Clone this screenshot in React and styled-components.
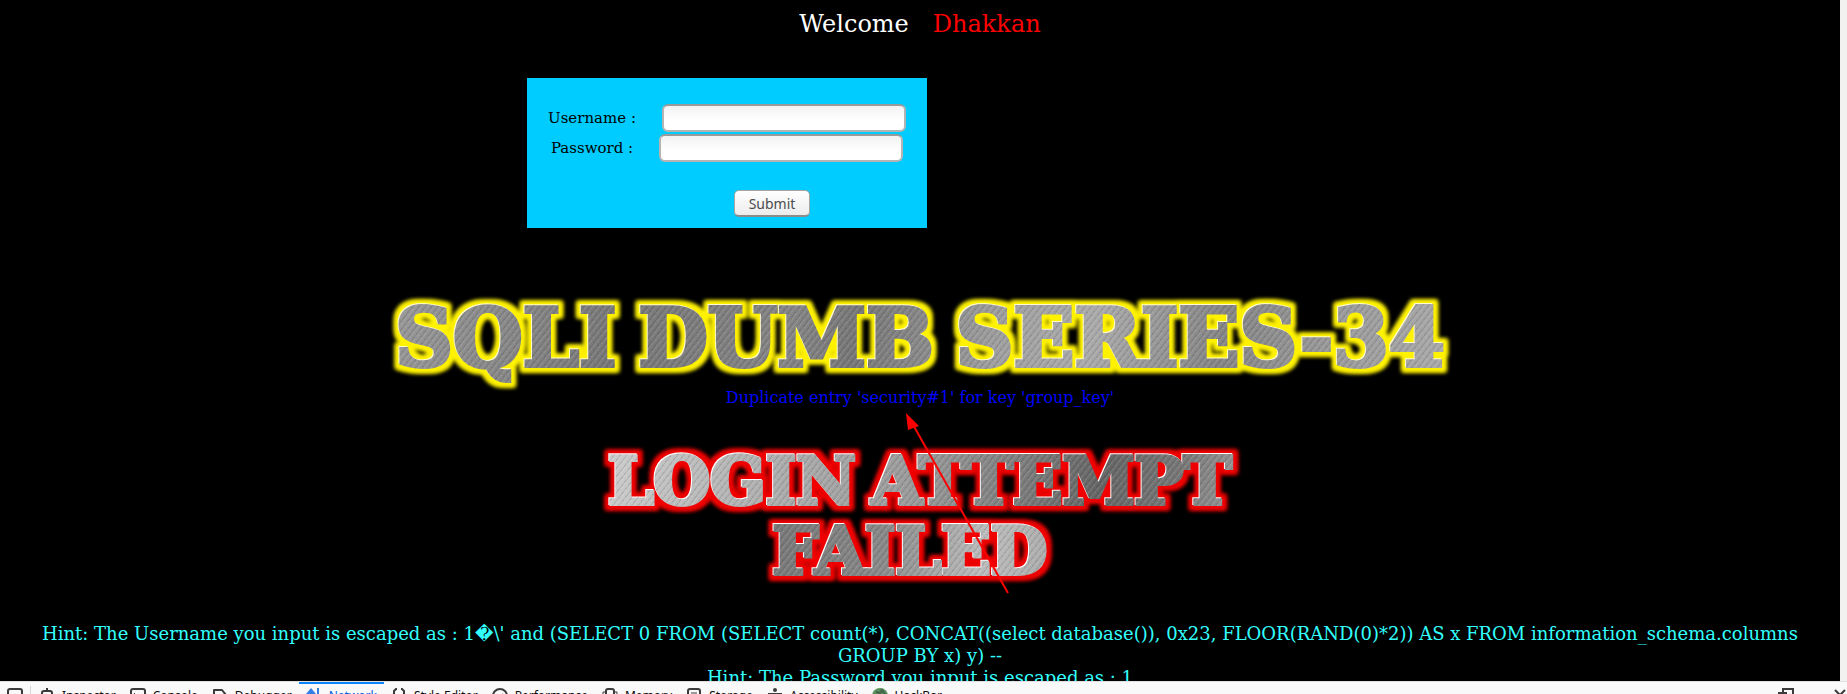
import React from "react";
import styled, { createGlobalStyle } from "styled-components";

const GlobalStyle = createGlobalStyle`
  * { box-sizing: border-box; }
  body { margin: 0; background: #000; }
`;

const Window = styled.div`
  display: flex;
  flex-direction: column;
  height: 100vh;
  overflow: hidden;
  background: #000;
  font-family: "DejaVu Serif", serif;
`;

const Viewport = styled.div`
  display: flex;
  flex: 1;
  min-height: 0;
`;

const Page = styled.main`
  position: relative;
  flex: 1;
  min-width: 0;
  overflow: hidden;
  text-align: center;
`;

const Scrollbar = styled.div`
  width: 7px;
  background: #f2f1f0;
`;

const Welcome = styled.h1`
  display: flex;
  justify-content: center;
  gap: 24px;
  margin: 9px 0 0;
  font-size: 24px;
  font-weight: 400;
  line-height: 30px;
  color: #fff;
`;

const Name = styled.span`
  color: #f00;
`;

const LoginForm = styled.form`
  display: flex;
  flex-direction: column;
  align-items: center;
  width: 400px;
  height: 150px;
  margin: 39px 0 0 527px;
  padding-top: 26px;
  background: #0cf;
`;

const Field = styled.div`
  display: flex;
  align-items: center;
  gap: 26px;
  height: 30px;
  padding-bottom: 2px;
  font-size: 15px;
  line-height: 18px;
  color: #000;
`;

const TextInput = styled.input`
  width: 244px;
  height: 28px;
  padding: 4px 6px;
  border: 2px solid #b4b4b4;
  border-top-color: #9a9a9a;
  border-radius: 6px;
  background: linear-gradient(#f2f2f2, #fff 60%);
  font: 15px "Open Sans", sans-serif;
  outline: none;
`;

const SubmitButton = styled.button`
  width: 76px;
  height: 27px;
  margin: 26px 0 0 90px;
  padding: 2px 0 0;
  border: 1px solid #a9a5a1;
  border-bottom: 2px solid #8f8b87;
  border-radius: 5px;
  background: linear-gradient(#fff, #ececec);
  font: 14px/22px "Noto Sans", sans-serif;
  color: #4c4c4c;
`;

const Banner = styled.h2`
  display: flex;
  flex-direction: column;
  align-items: center;
  margin: ${(p) => p.$top}px 0 0;
  font-size: ${(p) => p.$size}px;
  line-height: ${(p) => p.$line}px;
  font-weight: 700;
  filter: url(#${(p) => p.$glow});
`;

const Metal = styled.span`
  display: flex;
  gap: ${(p) => p.$gap || 0}px;
  padding: 0 4px;
  margin-right: ${(p) => p.$shift || 0}px;
  white-space: nowrap;
  color: transparent;
  -webkit-text-stroke: 4px transparent;
  background-image: repeating-linear-gradient(
      128deg,
      rgba(255, 255, 255, 0.1) 0 1px,
      transparent 1px 3px,
      rgba(0, 0, 0, 0.1) 3px 4px,
      transparent 4px 5px
    ),
    ${(p) => p.$sheen};
  background-clip: text;
  -webkit-background-clip: text;
`;

const ErrorText = styled.p`
  margin: 0;
  font-size: 16px;
  line-height: 20px;
  color: #00f;
`;

const Hints = styled.p`
  margin: 37px 8px 0;
  font-size: 18px;
  line-height: 22px;
  color: #3ff;
`;

const Arrow = styled.svg`
  position: absolute;
  top: 411px;
  left: calc(50% - 16px);
`;

const Toolbox = styled.footer`
  flex: none;
  height: 13px;
  overflow: hidden;
  border-top: 1px solid #e0e0e2;
  background: #f9f9fa;
`;

const TabBar = styled.nav`
  display: flex;
  align-items: stretch;
  height: 26px;
`;

const Tab = styled.button`
  display: flex;
  align-items: center;
  gap: 7px;
  padding: 0 7px;
  border: 0;
  border-top: 2px solid ${(p) => (p.$active ? "#0a84ff" : "transparent")};
  background: none;
  font: 12px/16px "Noto Sans", sans-serif;
  color: ${(p) => (p.$active ? "#0060df" : "#0c0c0d")};
  white-space: nowrap;
`;

const Divider = styled.span`
  width: 1px;
  margin: 4px 1px 0 0;
  background: #d7d7db;
`;

const WindowButtons = styled.span`
  display: flex;
  gap: 24px;
  margin: 0 -8px 0 auto;
`;

const Icon = ({ children }) => (
  <svg width="16" height="16" viewBox="0 0 16 16" fill="none" stroke="currentColor" strokeWidth="2" opacity="0.8" aria-hidden="true">
    {children}
  </svg>
);

const tabs = [
  ["Inspector", <><rect x="3" y="3" width="10" height="10" rx="2" /><path d="M8 0v3M8 13v3M0 8h3M13 8h3" /></>],
  ["Console", <><rect x="1" y="1" width="14" height="13" rx="2" /><path d="M4 5l3 3-3 3" strokeWidth="1" /></>],
  ["Debugger", <path d="M2 2h8l4 5-4 6H2z" strokeLinejoin="round" />],
  ["Network", <><path d="M5 15V3M12 0v12" /><path d="M0 6l5-6 5 6zM9 10l3 4 3-4z" fill="currentColor" strokeWidth="0" /></>],
  ["Style Editor", <path d="M6 1H5L3 3v3L2 8l1 2v4h3M10 1h1l2 2v3l1 2-1 2v4h-3" />],
  ["Performance", <><circle cx="8" cy="8" r="7" /><path d="M8 10l3-4" /></>],
  ["Memory", <><rect x="4" y="1" width="8" height="13" rx="2" /><path d="M4 4H1v8M12 4h3v8" strokeWidth="1" /></>],
  ["Storage", <><rect x="2" y="1" width="12" height="13" rx="2" /><path d="M5 5h6M5 10h6" strokeWidth="1" /></>],
  ["Accessibility", <><circle cx="8" cy="2" r="2" fill="currentColor" stroke="none" /><path d="M1 6h14M8 6v4l-3 6M8 10l3 6" /></>],
  ["HackBar", <><circle cx="8" cy="8" r="8" fill="#327a35" stroke="none" /><path d="M4 4l4 1 2-3 4 6" stroke="#173d20" /></>],
];

const Glow = ({ id, color, edge }) => (
  <filter id={id} x="-5%" y="-25%" width="110%" height="150%" colorInterpolationFilters="sRGB">
    <feMorphology in="SourceAlpha" operator="dilate" radius="4" result="wide" />
    <feGaussianBlur in="wide" stdDeviation="2" result="soft" />
    <feFlood floodColor={color} />
    <feComposite in2="soft" operator="in" result="halo" />
    <feOffset in="SourceAlpha" dx="-1" dy="-1" result="shifted" />
    <feFlood floodColor={edge} />
    <feComposite in2="shifted" operator="in" result="highlight" />
    <feMerge>
      <feMergeNode in="halo" />
      <feMergeNode in="halo" />
      <feMergeNode in="highlight" />
      <feMergeNode in="SourceGraphic" />
    </feMerge>
  </filter>
);

const titleSheen = "linear-gradient(100deg, #999 0%, #777 22%, #858585 38%, #777 44%, #a0a0a0 58%, #aaa 66%, #858585 78%, #999 88%, #aaa 100%)";
const attemptSheen = "linear-gradient(100deg, #ccc 0%, #aaa 30%, #999 50%, #666 78%, #777 90%, #999 100%)";
const failedSheen = "linear-gradient(100deg, #777 0%, #888 40%, #bbb 75%, #aaa 100%)";

export default function App() {
  return (
    <Window>
      <GlobalStyle />
      <Viewport>
        <Page>
          <Welcome>Welcome <Name>Dhakkan</Name></Welcome>
          <LoginForm onSubmit={(e) => e.preventDefault()}>
            <Field>
              <label htmlFor="uname">Username :</label>
              <TextInput id="uname" name="uname" type="text" />
            </Field>
            <Field>
              <label htmlFor="passwd">Password :</label>
              <TextInput id="passwd" name="passwd" type="password" />
            </Field>
            <SubmitButton type="submit">Submit</SubmitButton>
          </LoginForm>
          <Banner $top={60} $size={80} $line={100} $glow="yellow-glow">
            <Metal $sheen={titleSheen} $gap={22}>
              <span>SQLI</span> <span>DUMB</span> <span>SERIES-34</span>
            </Metal>
          </Banner>
          <ErrorText>Duplicate entry 'security#1' for key 'group_key'</ErrorText>
          <Banner $top={38} $size={65} $line={70} $glow="red-glow">
            <Metal $sheen={attemptSheen} $gap={16}>
              <span>LOGIN</span> <span>ATTEMPT</span>
            </Metal>
            <Metal $sheen={failedSheen} $shift={20}>FAILED</Metal>
          </Banner>
          <Hints>
            {"Hint: The Username you input is escaped as : 1\uFFFD\\' and (SELECT 0 FROM (SELECT count(*), CONCAT((select database()), 0x23, FLOOR(RAND(0)*2)) AS x FROM information_schema.columns GROUP BY x) y) --"}
            <br />
            Hint: The Password you input is escaped as : 1
          </Hints>
          <Arrow width="106" height="184" viewBox="0 0 106 184" aria-hidden="true">
            <path d="M8 12L104 182" stroke="#f00" strokeWidth="2" />
            <path d="M2 2L15 15L4 19z" fill="#f00" />
          </Arrow>
        </Page>
        <Scrollbar />
      </Viewport>
      <Toolbox>
        <TabBar>
          <Tab aria-label="Pick an element"><Icon><path d="M4 14H3a2 2 0 0 1-2-2V3a2 2 0 0 1 2-2h10a2 2 0 0 1 2 2v4" /><path d="M7 7l8 3-4 1-1 4z" fill="currentColor" stroke="none" /></Icon></Tab>
          <Divider />
          {tabs.map(([name, art]) => (
            <Tab key={name} $active={name === "Network"}><Icon>{art}</Icon>{name}</Tab>
          ))}
          <WindowButtons>
            <Tab aria-label="Responsive mode"><Icon><path d="M5 4V1h10v12H9" /><rect x="1" y="5" width="7" height="9" /></Icon></Tab>
            <Tab aria-label="Close"><Icon><path d="M3 2l10 10M13 2L3 12" /></Icon></Tab>
          </WindowButtons>
        </TabBar>
      </Toolbox>
      <svg width="0" height="0" aria-hidden="true">
        <defs>
          <Glow id="yellow-glow" color="#fff200" edge="#fffbd0" />
          <Glow id="red-glow" color="#f00000" edge="#fff" />
        </defs>
      </svg>
    </Window>
  );
}
